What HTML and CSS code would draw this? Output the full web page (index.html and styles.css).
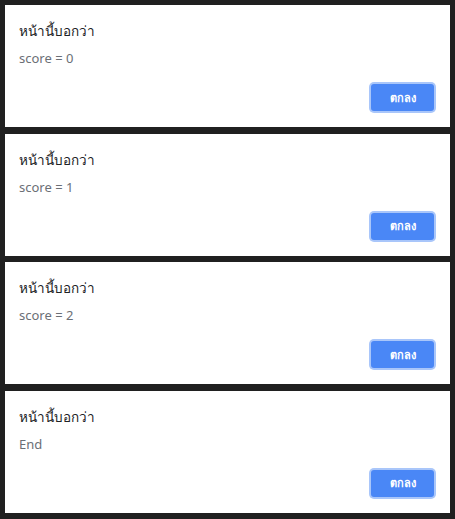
FILE: index.html
```html
<!DOCTYPE html>
<html lang="th">
<head>
<meta charset="utf-8">
<link rel="stylesheet" href="styles.css">
</head>
<body>
<div class="stack">
  <div class="dialog">
    <div class="title">หน้านี้บอกว่า</div>
    <div class="msg">score = 0</div>
    <div class="actions"><button class="ok">ตกลง</button></div>
  </div>
  <div class="dialog">
    <div class="title">หน้านี้บอกว่า</div>
    <div class="msg">score = 1</div>
    <div class="actions"><button class="ok">ตกลง</button></div>
  </div>
  <div class="dialog">
    <div class="title">หน้านี้บอกว่า</div>
    <div class="msg">score = 2</div>
    <div class="actions"><button class="ok">ตกลง</button></div>
  </div>
  <div class="dialog">
    <div class="title">หน้านี้บอกว่า</div>
    <div class="msg">End</div>
    <div class="actions"><button class="ok">ตกลง</button></div>
  </div>
</div>
</body>
</html>
```
FILE: styles.css
```css
html, body {
  margin: 0;
  padding: 0;
  background: #202020;
  height: 100%;
}
body {
  font-family: "Noto Sans", "DejaVu Sans", sans-serif;
}
.stack {
  padding: 5px 5px 0 5px;
  display: flex;
  flex-direction: column;
  gap: 6.67px;
}
.dialog {
  background: #ffffff;
  height: 122px;
  box-sizing: border-box;
  padding: 16px 16px 16px 14px;
  display: flex;
  flex-direction: column;
}
.title {
  font-size: 13.5px;
  color: #202124;
  line-height: 20px;
  margin-top: 0;
}
.msg {
  font-size: 13px;
  color: #6b6f76;
  line-height: 18px;
  margin-top: 8px;
}
.actions {
  margin-top: auto;
  display: flex;
  justify-content: flex-end;
}
.ok {
  width: 63px;
  height: 27px;
  border: none;
  border-radius: 3px;
  background: #4a87f6;
  color: #ffffff;
  font-family: inherit;
  font-size: 11px;
  font-weight: bold;
  box-shadow: 0 0 0 2px #a9c6fa;
  padding: 0;
}
```
